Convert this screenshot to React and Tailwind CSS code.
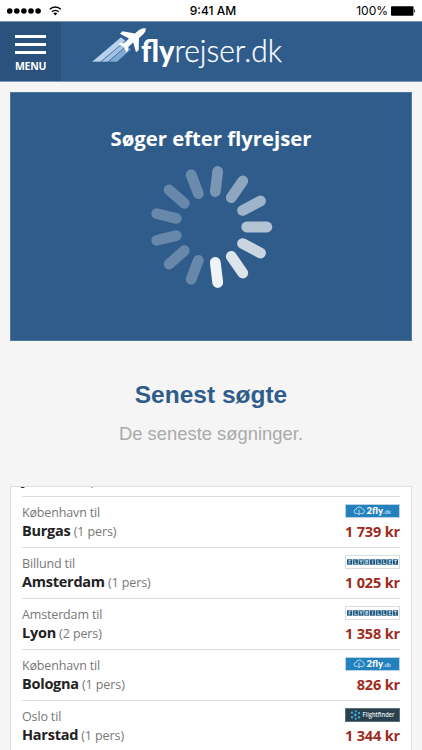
import React from 'react';

const searches = [
  { from: 'København', to: 'Jakarta', persons: 1, price: '', provider: null },
  { from: 'København', to: 'Burgas', persons: 1, price: '1 739 kr', provider: '2fly' },
  { from: 'Billund', to: 'Amsterdam', persons: 1, price: '1 025 kr', provider: 'flybillet' },
  { from: 'Amsterdam', to: 'Lyon', persons: 2, price: '1 358 kr', provider: 'flybillet' },
  { from: 'København', to: 'Bologna', persons: 1, price: '826 kr', provider: '2fly' },
  { from: 'Oslo', to: 'Harstad', persons: 1, price: '1 344 kr', provider: 'flightfinder' },
];

// Opacity of each spoke, clockwise from 3 o'clock
const spokes = [0.63, 0.74, 0.84, 0.93, 0.27, 0.27, 0.27, 0.27, 0.27, 0.29, 0.36, 0.46, 0.54];

function StatusBar() {
  return (
    <div className="h-[21px] shrink-0 bg-white text-black grid grid-cols-3 items-center font-['Inter',sans-serif] text-[12px] leading-[21px]">
      <div className="flex items-center pl-[7px]">
        <svg width="56" height="14" viewBox="0 0 56 14">
          {[2.7, 9.8, 16.9, 24, 31.1].map((x) => (
            <circle key={x} cx={x} cy="7" r="2.8" />
          ))}
          <g fill="none" stroke="#000" strokeWidth="1.5">
            <path d="M42.8 5.3a7.6 7.6 0 0 1 11 0" />
            <path d="M45 7.8a4.7 4.7 0 0 1 6.6 0" />
          </g>
          <path d="M48.3 11.5l-1.9-2a2.8 2.8 0 0 1 3.8 0z" />
        </svg>
      </div>
      <div className="text-center font-medium pl-1">9:41 AM</div>
      <div className="flex items-center justify-end pr-[6px] gap-[3px]">
        <span>100%</span>
        <svg width="25" height="10" viewBox="0 0 25 10">
          <rect x="0" y="0.3" width="22.5" height="9.4" rx="1" />
          <path d="M23.3 3.3c1.2.3 1.2 3.1 0 3.4z" />
        </svg>
      </div>
    </div>
  );
}

function Logo() {
  return (
    <svg width="200" height="50" viewBox="0 0 200 50">
      <g stroke="#2f5c8b" strokeWidth="0.6">
        <path d="M5.5 37L35 12l5 4L14.500 37z" fill="#b9d1ec" />
        <path d="M14.500 37L39 16.500l3 3.500L22 37z" fill="#a3c2e4" />
        <path d="M22 37L41 20.500l4 4L31 37z" fill="#80a9d4" />
      </g>
      <path
        d="M59.800 3.600c-2.800-.9-5.300.2-7.500 2L49 8.500 36.500 6.300 34 8.700l9 4.800-5 5-3.500-.8-1.800 1.600 5.300 2.700 2 5.200 2-1.500.2-3.800 5-4.300 2.800 9.600 2.700-2L53 13l3.500-3c2-1.700 3.400-3.700 3.300-6.400z"
        fill="#fff"
      />
      <g fill="#fff" fontFamily="Lato, sans-serif" fontSize="31">
        <text x="55" y="36.700" fontWeight="900" textLength="33.500" lengthAdjust="spacingAndGlyphs">fly</text>
        <text x="88.500" y="36.700" fontWeight="300" stroke="#fff" strokeWidth="0.25" textLength="107.500" lengthAdjust="spacingAndGlyphs">rejser.dk</text>
      </g>
    </svg>
  );
}

function Header() {
  return (
    <header className="h-[61px] shrink-0 bg-[#2f5c8b] border-t border-b border-t-[#7898b8] border-b-[#7898b8] flex">
      <button className="w-[61px] bg-[#2b527c] text-white flex flex-col items-center pt-[13px]">
        <span className="flex flex-col gap-[5px]">
          <span className="block w-[31px] h-[3px] bg-white"></span>
          <span className="block w-[31px] h-[3px] bg-white"></span>
          <span className="block w-[31px] h-[3px] bg-white"></span>
        </span>
        <span className="mt-[5px] text-[10.5px] leading-[14px] font-bold tracking-[-0.3px]">MENU</span>
      </button>
      <div className="pl-[25px] pt-[3px]">
        <Logo />
      </div>
    </header>
  );
}

function Spinner() {
  return (
    <svg width="124" height="124" viewBox="-62 -62 124 124">
      {spokes.map((opacity, i) => (
        <rect
          key={i}
          x="30.3"
          y="-5.4"
          width="31"
          height="10.8"
          rx="5.4"
          fill="#fff"
          fillOpacity={opacity}
          transform={`rotate(${(i * 360) / 13})`}
        />
      ))}
    </svg>
  );
}

function ProviderLogo({ provider }) {
  if (provider === '2fly') {
    return (
      <svg width="55" height="14" viewBox="0 0 55 14">
        <rect x="0.5" y="0.5" width="54" height="13" fill="#2382bd" stroke="#b9d3e4" />
        <g fill="none" stroke="#b5d9ef" strokeWidth="1">
          <path d="M12 9.500h-.7a2 2 0 0 1-.2-4 3.300 3.300 0 0 1 6.300-.5 2.300 2.300 0 0 1 .3 4.500H16" />
          <path d="M14 5.500v5.300M12.300 9l1.700 1.800L15.700 9" />
        </g>
        <text x="21.500" y="10" fill="#fff" fontFamily="Lato, sans-serif" fontWeight="900" fontSize="9.5" textLength="16.500" lengthAdjust="spacingAndGlyphs">2fly</text>
        <text x="38" y="10" fill="#b5d9ef" fontFamily="Lato, sans-serif" fontWeight="700" fontSize="5.500" textLength="8" lengthAdjust="spacingAndGlyphs">.dk</text>
      </svg>
    );
  }
  if (provider === 'flybillet') {
    return (
      <svg width="55" height="14" viewBox="0 0 55 14">
        <rect x="0.5" y="0.5" width="54" height="13" fill="#fff" stroke="#d9dcdf" />
        {'FLYBILLET'.split('').map((letter, i) => (
          <g key={i}>
            <rect x={2 + i * 5.75} y="4.300" width="5.100" height="5.400" fill="#1c567f" />
            <text x={4.55 + i * 5.75} y="8.800" textAnchor="middle" fill="#d3e4ef" fontFamily="Open Sans, sans-serif" fontWeight="700" fontSize="5">
              {letter}
            </text>
          </g>
        ))}
      </svg>
    );
  }
  if (provider === 'flightfinder') {
    return (
      <svg width="55" height="14" viewBox="0 0 55 14">
        <rect x="0.5" y="0.5" width="54" height="13" fill="#28414d" stroke="#5d6f78" />
        <g fill="#3fa9d8">
          <circle cx="7" cy="4.800" r="1.200" />
          <circle cx="10.800" cy="3.300" r="1.100" />
          <circle cx="14" cy="5" r="1.200" />
          <circle cx="10.300" cy="7" r="1.400" />
          <circle cx="7" cy="9.200" r="1.200" />
          <circle cx="10.800" cy="10.800" r="1.100" />
          <circle cx="14" cy="9.200" r="1.200" />
        </g>
        <text x="17.500" y="9.200" fill="#e6edf0" fontFamily="Open Sans, sans-serif" fontWeight="600" fontSize="6.3" textLength="32" lengthAdjust="spacingAndGlyphs">Flightfinder</text>
      </svg>
    );
  }
  return null;
}

function SearchRow({ search }) {
  return (
    <li className="h-[51px] border-t border-[#dcdcdc] flex justify-between">
      <div className="pt-[7px] text-[#777]">
        <p className="text-[12.5px] leading-[18px] tracking-[-0.15px]">{search.from} til</p>
        <p className="-mt-px text-[12.5px] leading-[20px] tracking-[-0.1px]">
          <strong className="text-[14.5px] tracking-[-0.25px] text-[#222]">{search.to}</strong> ({search.persons} pers)
        </p>
      </div>
      <div className="pt-[7px] flex flex-col items-end">
        <ProviderLogo provider={search.provider} />
        <span className="mt-[4px] text-[14.5px] leading-[20px] tracking-[-0.15px] font-bold text-[#9e2b20] whitespace-nowrap">{search.price}</span>
      </div>
    </li>
  );
}

export default function App() {
  return (
    <div className="w-full h-[750px] overflow-hidden bg-[#f5f5f5] flex flex-col font-['Open_Sans',sans-serif]">
      <StatusBar />
      <Header />

      <main className="flex-1 min-h-0 px-[10px] pt-[10px] flex flex-col">
        <section className="h-[249px] shrink-0 bg-[#2f5c8b] border border-[#537799] flex flex-col items-center">
          <h1 className="mt-[31px] text-[20.3px] leading-[28px] font-bold text-white">Søger efter flyrejser</h1>
          <div className="mt-[13px]">
            <Spinner />
          </div>
        </section>

        <section className="shrink-0 text-center font-['Liberation_Sans',Arial,sans-serif]">
          <h2 className="mt-[39px] text-[24.5px] leading-[30px] font-bold text-[#2f5c8b]">Senest søgte</h2>
          <p className="mt-[13px] text-[18.4px] leading-[22px] text-[#aaa]">De seneste søgninger.</p>
        </section>

        {/* Latest searches, scrolled slightly so the first row is cut off */}
        <section className="mt-[41px] flex-1 min-h-0 overflow-hidden bg-white border border-b-0 border-[#dedede] px-[11px]">
          <ul className="-mt-[42px]">
            {searches.map((search) => (
              <SearchRow key={search.to} search={search} />
            ))}
          </ul>
        </section>
      </main>
    </div>
  );
}
